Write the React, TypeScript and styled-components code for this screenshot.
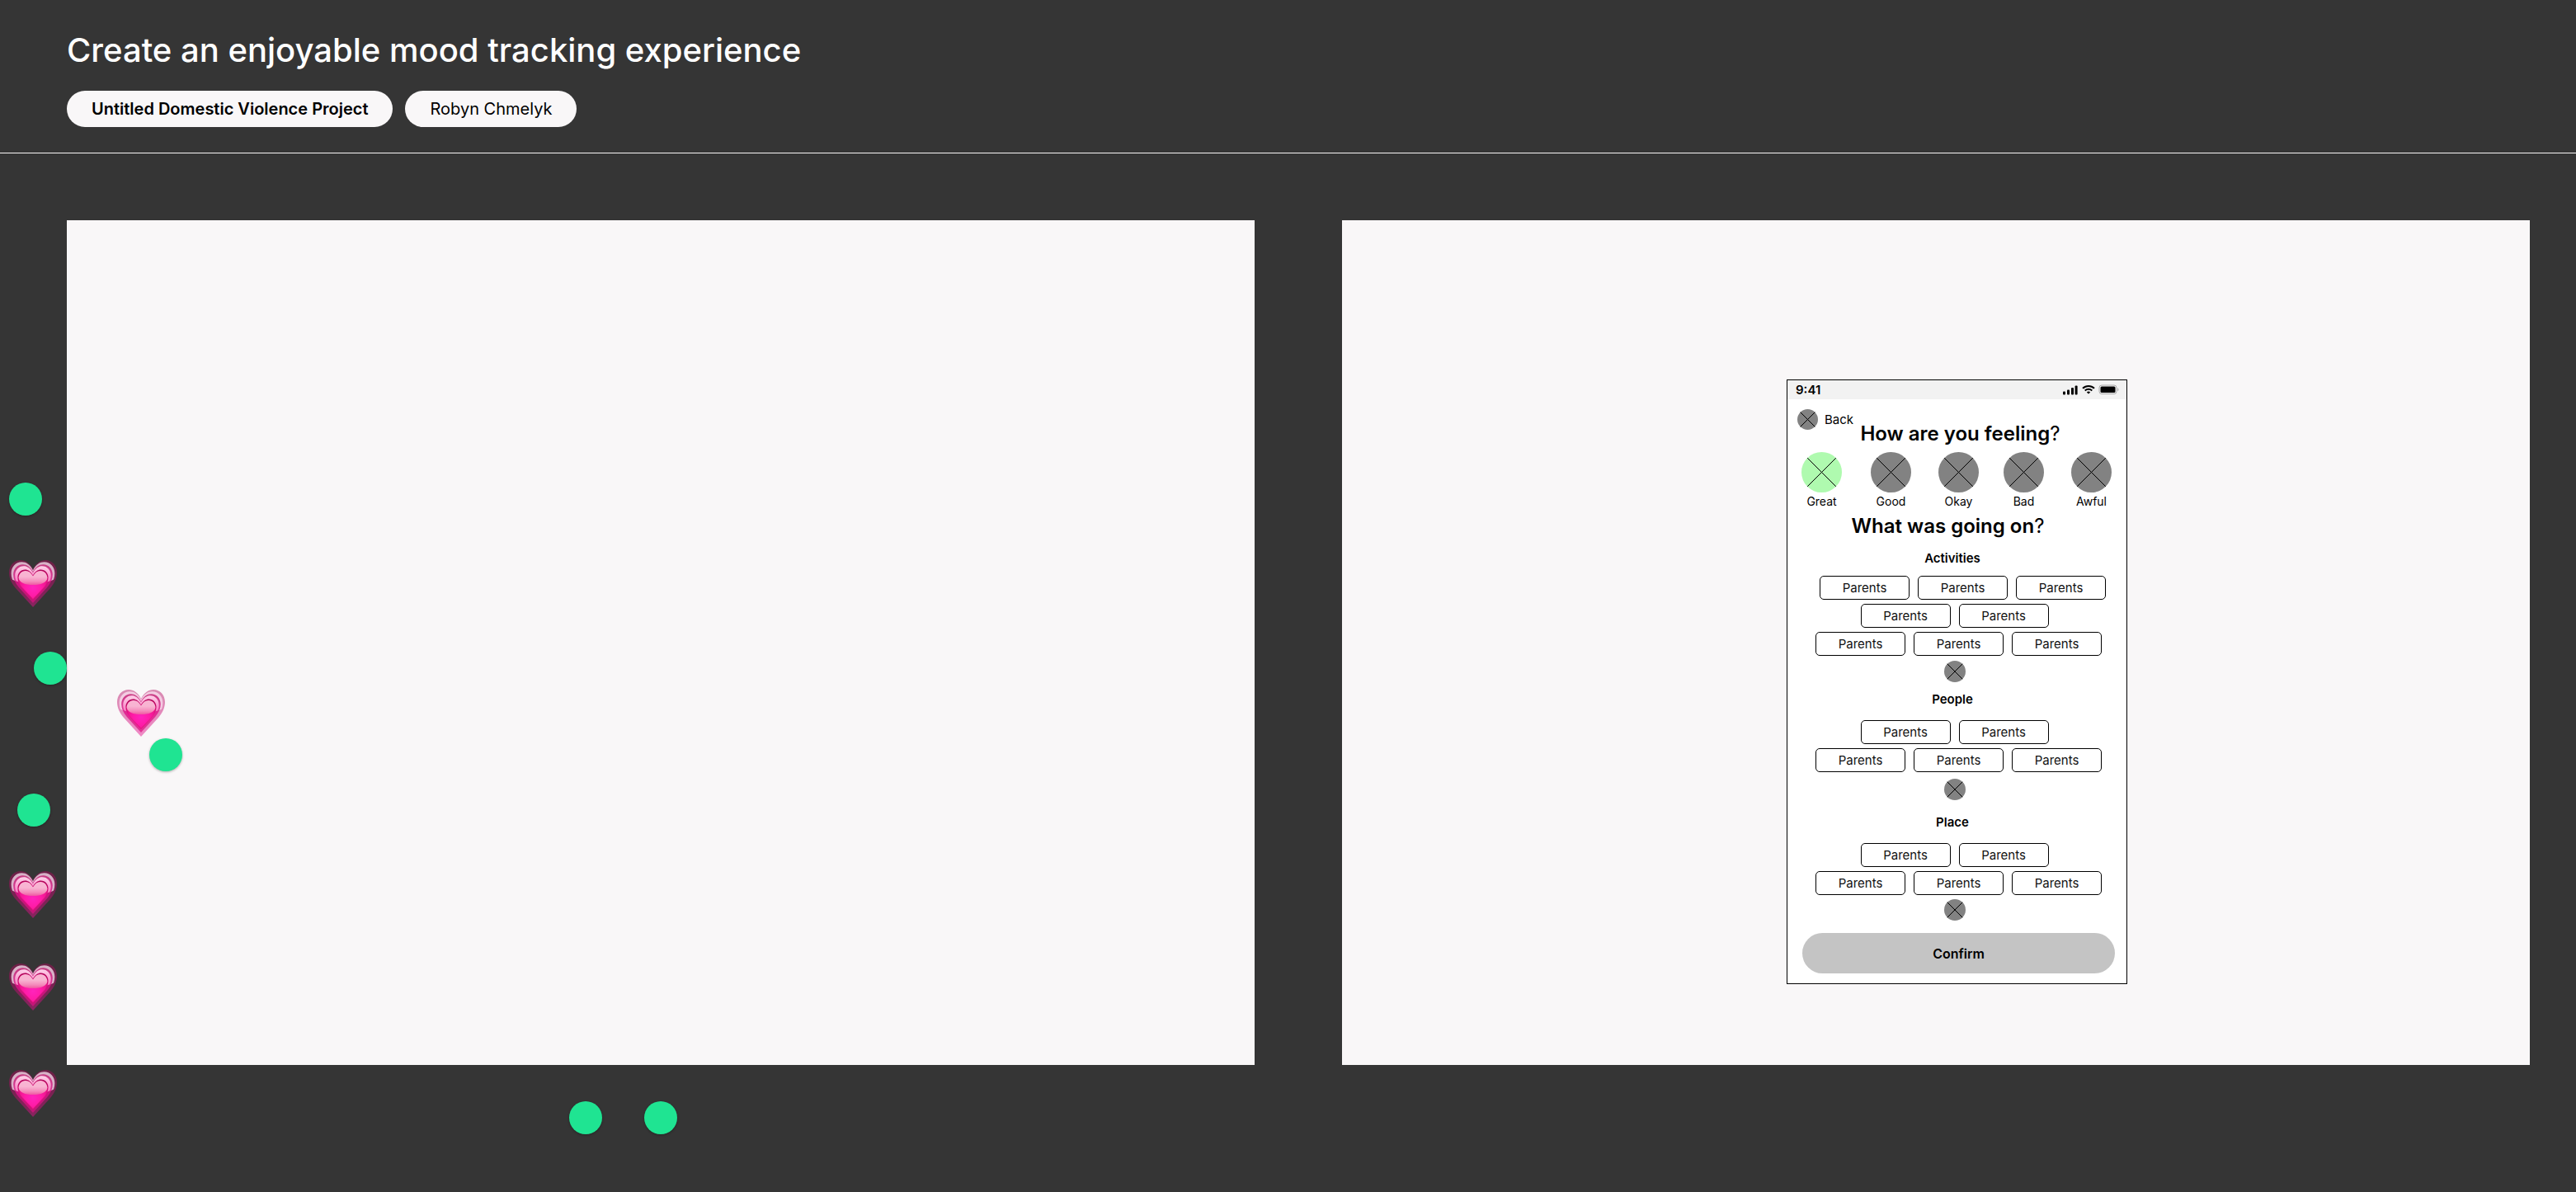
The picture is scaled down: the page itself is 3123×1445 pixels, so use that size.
import React from "react";
import styled, { createGlobalStyle } from "styled-components";

const GlobalStyle = createGlobalStyle`
  *, *::before, *::after { box-sizing: border-box; }
  html, body { margin: 0; background: #353535; }
  body { font-family: "Inter", "Roboto", sans-serif; color: #000; }
`;

const Page = styled.div`
  position: relative;
  min-height: 100vh;
  background: #353535;
`;

const Header = styled.header`
  padding: 37px 81px 31px;
  border-bottom: 1px solid #f9f7f8;
`;

const Title = styled.h1`
  margin: 0 0 25px;
  font-size: 40px;
  line-height: 48px;
  font-weight: 500;
  color: #fff;
`;

const Tags = styled.div`
  display: flex;
  gap: 15px;
`;

const Tag = styled.span<{ $strong?: boolean }>`
  display: flex;
  align-items: center;
  height: 44px;
  padding: 0 30px;
  border-radius: 22px;
  background: #f9f7f8;
  font-size: 20px;
  line-height: 24px;
  font-weight: ${(p) => (p.$strong ? 600 : 400)};
`;

const Boards = styled.main`
  display: grid;
  grid-template-columns: 1fr 1fr;
  gap: 106px;
  padding: 81px 56px 154px 81px;
`;

const Board = styled.section`
  min-height: 1024px;
  background: #f9f7f8;
`;

const PhoneBoard = styled(Board)`
  display: flex;
  justify-content: center;
  align-items: flex-start;
  padding: 193px 0 98px 51px;
`;

const Phone = styled.div`
  width: 413px;
  border: 1px solid #000;
  background: #fff;
`;

const StatusBar = styled.div`
  display: flex;
  align-items: center;
  justify-content: space-between;
  height: 23px;
  padding: 0 9px 0 10px;
  background: #f2f2f2;
  font-size: 15px;
  font-weight: 600;
`;

const PhoneBody = styled.div`
  display: flex;
  flex-direction: column;
  padding: 12px 14px 12px 12px;
`;

const BackButton = styled.button`
  display: flex;
  align-items: center;
  align-self: flex-start;
  gap: 8px;
  height: 25px;
  padding: 0;
  border: 0;
  background: none;
  font: 400 15px/20px "Inter", sans-serif;
  color: #000;
`;

const Question = styled.h2<{ $second?: boolean }>`
  margin: ${(p) => (p.$second ? "5px 20px 0 0" : "-10px 0 7px 10px")};
  text-align: center;
  font-size: 24px;
  line-height: 30px;
  font-weight: 600;
`;

const Mark = styled.span`
  font-weight: 400;
`;

const Moods = styled.div`
  display: grid;
  grid-template-columns: 84px 82px 79px 82px 49px;
  padding-left: 5px;
`;

const Mood = styled.button`
  display: flex;
  flex-direction: column;
  align-items: center;
  gap: 1px;
  width: 49px;
  padding: 0;
  border: 0;
  background: none;
  font: 400 14px/20px "Inter", sans-serif;
  color: #000;
`;

const Group = styled.section<{ $gap: number }>`
  display: flex;
  flex-direction: column;
  align-items: center;
  margin-top: ${(p) => p.$gap}px;
  padding-right: 4px;
`;

const GroupTitle = styled.h3<{ $gap: number }>`
  margin: 0 5px ${(p) => p.$gap}px 0;
  font-size: 15px;
  line-height: 20px;
  font-weight: 600;
`;

const Row = styled.div<{ $indent: number }>`
  display: flex;
  gap: 10px;
  margin-bottom: 5px;
  padding-left: ${(p) => p.$indent}px;
`;

const Chip = styled.button`
  width: 109px;
  height: 29px;
  padding: 0;
  border: 1px solid #000;
  border-radius: 5px;
  background: #fff;
  font: 400 15px/20px "Inter", sans-serif;
  color: #111;
`;

const AddButton = styled.button<{ $gap: number }>`
  display: flex;
  margin-top: ${(p) => p.$gap}px;
  padding: 0;
  border: 0;
  background: none;
`;

const Confirm = styled.button`
  height: 49px;
  margin: 15px 0 0 6px;
  padding: 0;
  border: 0;
  border-radius: 25px;
  background: #c4c4c4;
  font: 600 16px/20px "Inter", sans-serif;
  color: #000;
`;

const Sticker = styled.div<{ $x: number; $y: number }>`
  position: absolute;
  left: ${(p) => p.$x}px;
  top: ${(p) => p.$y}px;
  line-height: 0;
`;

const Dot = styled(Sticker)`
  width: 40px;
  height: 40px;
  border-radius: 50%;
  background: #1fe492;
  box-shadow: 0 1px 3px rgba(0, 0, 0, 0.3);
`;

function CrossCircle({ size, fill = "#828282" }: { size: number; fill?: string }) {
  const c = size / 2;
  const d = c * 0.707;
  return (
    <svg width={size} height={size} viewBox={`0 0 ${size} ${size}`} aria-hidden="true">
      <circle cx={c} cy={c} r={c} fill={fill} />
      <path
        d={`M${c - d} ${c - d}L${c + d} ${c + d}M${c + d} ${c - d}L${c - d} ${c + d}`}
        stroke="#000"
        strokeWidth="1"
      />
    </svg>
  );
}

function StatusIcons() {
  return (
    <svg width="68" height="13" viewBox="0 0 68 13" aria-hidden="true">
      <rect x="0" y="8.500" width="3" height="4" rx="1" />
      <rect x="5" y="6.500" width="3" height="6" rx="1" />
      <rect x="10" y="4" width="3" height="8.500" rx="1" />
      <rect x="14.600" y="1.500" width="3" height="11" rx="1" />
      <g fill="none" stroke="#000" strokeWidth="2">
        <path d="M24 4.800a10 10 0 0 1 14 0" />
        <path d="M26.700 7.500a6.200 6.200 0 0 1 8.600 0" />
      </g>
      <path d="M28.800 9.400a3.400 3.400 0 0 1 4.400 0L31 11.600z" />
      <rect x="44" y="1" width="21" height="10.500" rx="3" fill="none" stroke="#a8a8a8" />
      <rect x="45.500" y="2.500" width="18" height="7.500" rx="1.500" />
      <path d="M66.300 4.300v4c1.600-.6 1.600-3.400 0-4z" fill="#a8a8a8" />
    </svg>
  );
}

const HEART =
  "M29 11C25 3.500 20 0 14 0C6 0 0 6.500 0 15C0 22 3 28 8 34L29 57L50 34C55 28 58 22 58 15C58 6.500 52 0 44 0C38 0 33 3.500 29 11Z";

function Heart({ id }: { id: string }) {
  return (
    <svg width="58" height="57" viewBox="0 0 58 57" role="img" aria-label="Growing heart">
      <defs>
        <linearGradient id={`${id}-outer`} x1="0" y1="0" x2="0" y2="1">
          <stop offset="0" stopColor="#b0065c" stopOpacity=".45" />
          <stop offset="1" stopColor="#e6108f" stopOpacity=".48" />
        </linearGradient>
        <linearGradient id={`${id}-mid`} x1="0" y1="0" x2="0" y2="1">
          <stop offset="0" stopColor="#c01f70" stopOpacity=".8" />
          <stop offset=".5" stopColor="#e0108a" stopOpacity=".8" />
          <stop offset="1" stopColor="#dc1080" stopOpacity=".7" />
        </linearGradient>
        <linearGradient id={`${id}-rim`} x1="0" y1="0" x2="0" y2="1">
          <stop offset="0" stopColor="#b00558" />
          <stop offset=".3" stopColor="#c80c6c" />
          <stop offset=".55" stopColor="#ec148c" />
          <stop offset="1" stopColor="#dc0f76" />
        </linearGradient>
        <radialGradient id={`${id}-core`} cx=".5" cy=".6" r=".55">
          <stop offset="0" stopColor="#ff24bc" />
          <stop offset=".5" stopColor="#ff1ca8" />
          <stop offset="1" stopColor="#ea1486" />
        </radialGradient>
        <linearGradient id={`${id}-gloss`} x1="0" y1="12" x2="0" y2="31" gradientUnits="userSpaceOnUse">
          <stop offset="0" stopColor="#f8b4d2" />
          <stop offset=".5" stopColor="#f48bbb" />
          <stop offset="1" stopColor="#ee4699" />
        </linearGradient>
        <linearGradient id={`${id}-band`} x1="0" y1="0" x2="0" y2="28" gradientUnits="userSpaceOnUse">
          <stop offset="0" stopColor="#fdd0e8" />
          <stop offset=".8" stopColor="#fa86c6" />
          <stop offset="1" stopColor="#f35bb0" />
        </linearGradient>
        <clipPath id={`${id}-top`}>
          <path d="M0 0H58V22Q46 28 29 29Q12 28 0 22Z" />
        </clipPath>
        <clipPath id={`${id}-lens`}>
          <path d="M0 0H58V22H46.500Q44 30 29 30Q14 30 11.500 22H0Z" />
        </clipPath>
      </defs>
      <path d={HEART} fill={`url(#${id}-outer)`} />
      <g clipPath={`url(#${id}-top)`}>
        <path d={HEART} transform="translate(2.600 2.300) scale(.91)" fill="#fbe3f2" fillOpacity=".75" />
      </g>
      <path d={HEART} transform="translate(5.200 5.200) scale(.82)" fill={`url(#${id}-mid)`} />
      <g clipPath={`url(#${id}-top)`}>
        <path d={HEART} transform="translate(7.200 7.300) scale(.75)" fill={`url(#${id}-band)`} />
      </g>
      <path d={HEART} transform="translate(10.400 11.500) scale(.64)" fill={`url(#${id}-rim)`} />
      <path d={HEART} transform="translate(11.600 12.900) scale(.6)" fill={`url(#${id}-core)`} />
      <g clipPath={`url(#${id}-lens)`}>
        <path d={HEART} transform="translate(11.600 12.900) scale(.6)" fill={`url(#${id}-gloss)`} />
      </g>
    </svg>
  );
}

const MOODS = ["Great", "Good", "Okay", "Bad", "Awful"];

const GROUPS = [
  {
    title: "Activities",
    top: 14,
    titleGap: 11,
    addGap: 1,
    rows: [
      { count: 3, indent: 20 },
      { count: 2, indent: 0 },
      { count: 3, indent: 10 },
    ],
  },
  {
    title: "People",
    top: 11,
    titleGap: 15,
    addGap: 3,
    rows: [
      { count: 2, indent: 0 },
      { count: 3, indent: 10 },
    ],
  },
  {
    title: "Place",
    top: 17,
    titleGap: 15,
    addGap: 0,
    rows: [
      { count: 2, indent: 0 },
      { count: 3, indent: 10 },
    ],
  },
];

const DOTS = [
  [11, 585],
  [41, 790],
  [181, 895],
  [21, 962],
  [690, 1335],
  [781, 1335],
];

const HEARTS = [
  [11, 679],
  [142, 836],
  [11, 1056],
  [11, 1168],
  [11, 1297],
];

export default function App() {
  return (
    <Page>
      <GlobalStyle />
      <Header>
        <Title>Create an enjoyable mood tracking experience</Title>
        <Tags>
          <Tag $strong>Untitled Domestic Violence Project</Tag>
          <Tag>Robyn Chmelyk</Tag>
        </Tags>
      </Header>
      <Boards>
        <Board />
        <PhoneBoard>
          <Phone>
            <StatusBar>
              <span>9:41</span>
              <StatusIcons />
            </StatusBar>
            <PhoneBody>
              <BackButton type="button">
                <CrossCircle size={25} />
                Back
              </BackButton>
              <Question>
                How are you feeling<Mark>?</Mark>
              </Question>
              <Moods>
                {MOODS.map((mood, i) => (
                  <Mood type="button" key={mood}>
                    <CrossCircle size={49} fill={i === 0 ? "#affaaf" : undefined} />
                    {mood}
                  </Mood>
                ))}
              </Moods>
              <Question $second>
                What was going on<Mark>?</Mark>
              </Question>
              {GROUPS.map((group) => (
                <Group key={group.title} $gap={group.top}>
                  <GroupTitle $gap={group.titleGap}>{group.title}</GroupTitle>
                  {group.rows.map((row, r) => (
                    <Row key={r} $indent={row.indent}>
                      {Array.from({ length: row.count }, (_, c) => (
                        <Chip type="button" key={c}>
                          Parents
                        </Chip>
                      ))}
                    </Row>
                  ))}
                  <AddButton type="button" $gap={group.addGap} aria-label={`Add to ${group.title}`}>
                    <CrossCircle size={26} />
                  </AddButton>
                </Group>
              ))}
              <Confirm type="button">Confirm</Confirm>
            </PhoneBody>
          </Phone>
        </PhoneBoard>
      </Boards>
      {DOTS.map(([x, y]) => (
        <Dot key={`${x}-${y}`} $x={x} $y={y} />
      ))}
      {HEARTS.map(([x, y], i) => (
        <Sticker key={`${x}-${y}`} $x={x} $y={y}>
          <Heart id={`heart${i}`} />
        </Sticker>
      ))}
    </Page>
  );
}
